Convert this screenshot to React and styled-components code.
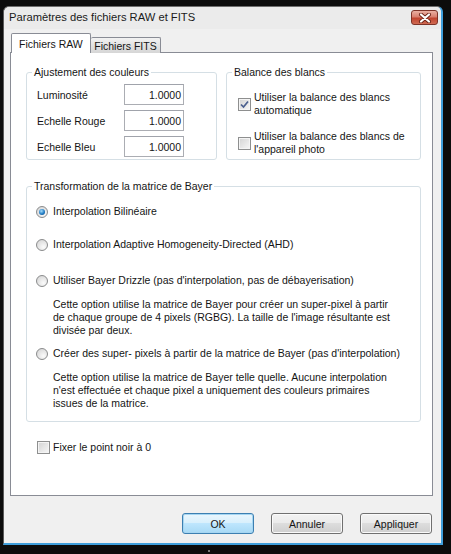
import React from 'react'
import styled, { createGlobalStyle } from 'styled-components'

const GlobalStyle = createGlobalStyle`
  html, body {
    margin: 0;
    padding: 0;
    background: #0c0c0c;
  }
  * {
    box-sizing: border-box;
  }
`;

const Screen = styled.div`
  width: 451px;
  height: 554px;
  padding: 6px 0 0 3px;
  background: #0c0c0c;
  overflow: hidden;
  font-family: "Liberation Sans", Arial, sans-serif;
  font-size: 10.5px;
  color: #151515;
`;

const Window = styled.div`
  width: 440px;
  height: 539px;
  display: flex;
  flex-direction: column;
  background: #f0f0f0;
  border-top: 1px solid #6d6d6d;
  border-left: 1px solid #5a5a5a;
  border-right: 2px solid #3f9fdc;
  border-bottom: 2px solid #3f9fdc;
  border-radius: 6px 6px 0 0;
`;

const TitleBar = styled.div`
  height: 22px;
  display: flex;
  align-items: flex-start;
  justify-content: space-between;
  padding: 3px 3px 0 5px;
  background: #ebebeb;
  border-radius: 6px 6px 0 0;
`;

const Title = styled.div`
  font-size: 11.2px;
  line-height: 14px;
  color: #1a1a1a;
`;

const CloseButton = styled.div`
  width: 27px;
  height: 15px;
  margin-top: 0;
  display: flex;
  align-items: center;
  justify-content: center;
  border: 1px solid #7d3328;
  border-radius: 3px;
  background: linear-gradient(#eab0a2 0%, #d9806f 45%, #c0442f 55%, #d06a52 100%);
`;

const Body = styled.div`
  flex: 1;
  display: flex;
  flex-direction: column;
  padding: 4px 8px 0 6px;
`;

const Tabs = styled.div`
  height: 20px;
  display: flex;
  align-items: flex-end;
  padding-left: 1px;
`;

const Tab = styled.div`
  position: relative;
  width: ${p => (p.$active ? 80 : 70)}px;
  height: ${p => (p.$active ? 20 : 16)}px;
  display: flex;
  align-items: center;
  justify-content: ${p => (p.$active ? 'flex-start' : 'center')};
  padding-left: ${p => (p.$active ? 7 : 0)}px;
  border: 1px solid #898c95;
  border-bottom: none;
  border-left: ${p => (p.$active ? '1px solid #898c95' : 'none')};
  border-radius: 2px 2px 0 0;
  background: ${p =>
    p.$active ? '#ffffff' : 'linear-gradient(#f3f3f3, #e2e2e2 50%, #d6d6d6)'};
  z-index: ${p => (p.$active ? 2 : 0)};
`;

const Panel = styled.div`
  height: 444px;
  margin-top: -1px;
  display: flex;
  flex-direction: column;
  padding: 13px 11px 0 15px;
  background: #ffffff;
  border: 1px solid #898c95;
`;

const TopRow = styled.div`
  display: grid;
  grid-template-columns: 191px 1fr;
  column-gap: 9px;
`;

const Group = styled.fieldset`
  margin: ${p => p.$mt || 0}px 0 0 0;
  padding: 0;
  min-width: 0;
  border: 1px solid #d5dfe5;
  border-radius: 3px;
`;

const Legend = styled.legend`
  margin-left: 5px;
  padding: 0 2px;
  line-height: 13px;
`;

const ValueGrid = styled.div`
  display: grid;
  grid-template-columns: 87px 60px;
  row-gap: 5px;
  align-items: center;
  padding: 5px 0 2px 10px;
`;

const Input = styled.div`
  height: 21px;
  display: flex;
  align-items: center;
  justify-content: flex-end;
  padding-right: 2px;
  border: 1px solid #abadb3;
  border-top-color: #a0a3ab;
  background: #ffffff;
`;

const CheckList = styled.div`
  display: flex;
  flex-direction: column;
  gap: 13px;
  padding: 12px 0 3px 11px;
`;

const CheckRow = styled.div`
  display: flex;
  align-items: center;
  gap: 3px;
  margin: ${p => p.$mt || 0}px 0 0 ${p => p.$ml || 0}px;
  line-height: 13px;
`;

const Box = styled.span`
  flex: none;
  width: 13px;
  height: 13px;
  display: flex;
  align-items: center;
  justify-content: center;
  border: 1px solid #8e8f8f;
  background: linear-gradient(135deg, #d3d3d3, #f7f7f7);
  box-shadow: inset 0 0 0 1px #f4f4f4;
`;

const OptionList = styled.div`
  display: flex;
  flex-direction: column;
  padding: 12px 0 11px 9px;
`;

const RadioRow = styled.div`
  display: flex;
  align-items: center;
  gap: 5px;
  margin-top: ${p => p.$mt || 0}px;
  line-height: 13px;
`;

const Radio = styled.span`
  flex: none;
  width: 12px;
  height: 12px;
  display: flex;
  align-items: center;
  justify-content: center;
  border: 1px solid #8a8b8c;
  border-radius: 50%;
  background: radial-gradient(circle at 65% 70%, #fbfbfb, #d9d9d9 80%);
  &::after {
    content: '';
    display: ${p => (p.$checked ? 'block' : 'none')};
    width: 6px;
    height: 6px;
    border-radius: 50%;
    background: radial-gradient(circle at 40% 35%, #a6dcfb, #1f7cc4 55%, #0b3f7a);
  }
`;

const Description = styled.div`
  margin: ${p => p.$mt || 0}px 0 0 17px;
  line-height: 13px;
`;

const ButtonRow = styled.div`
  display: flex;
  justify-content: flex-end;
  gap: 17px;
  margin-top: 17px;
  padding-right: 1px;
`;

const Button = styled.div`
  width: 72px;
  height: 21px;
  display: flex;
  align-items: center;
  justify-content: center;
  border: 1px solid ${p => (p.$primary ? '#3c7fb1' : '#707070')};
  border-radius: 3px;
  background: ${p =>
    p.$primary
      ? 'linear-gradient(#eaf6fd 0%, #d9f0fc 45%, #bee6fd 50%, #a7d9f5 100%)'
      : 'linear-gradient(#f2f2f2 0%, #ebebeb 45%, #dddddd 50%, #cfcfcf 100%)'};
  box-shadow: inset 0 0 0 1px ${p => (p.$primary ? '#a6d6f2' : '#fafafa')};
`;

const Dot = styled.div`
  width: 2px;
  height: 2px;
  margin: 5px 0 0 205px;
  background: #777;
`;

const CloseIcon = () => (
  <svg width="14" height="10" viewBox="0 0 14 10">
    <path d="M3 1.5 L11 8.5 M11 1.5 L3 8.5" stroke="#6b2418" strokeWidth="4" strokeLinecap="round" />
    <path d="M3 1.5 L11 8.5 M11 1.5 L3 8.5" stroke="#ffffff" strokeWidth="2.2" strokeLinecap="round" />
  </svg>
);

const Check = ({ checked }) => (
  <Box>
    {checked && (
      <svg width="9" height="9" viewBox="0 0 9 9">
        <path d="M1 4.5 L3.5 7 L8 1.5" fill="none" stroke="#4a5f8e" strokeWidth="1.7" />
      </svg>
    )}
  </Box>
);

const values = [
  ['Luminosité', '1.0000'],
  ['Echelle Rouge', '1.0000'],
  ['Echelle Bleu', '1.0000'],
];

const options = [
  { label: 'Interpolation Bilinéaire', checked: true, mt: 0 },
  { label: 'Interpolation Adaptive Homogeneity-Directed (AHD)', mt: 20 },
  {
    label: "Utiliser Bayer Drizzle (pas d'interpolation, pas de débayerisation)",
    mt: 23,
    desc: [
      'Cette option utilise la matrice de Bayer pour créer un super-pixel à partir',
      "de chaque groupe de 4 pixels (RGBG). La taille de l'image résultante est",
      'divisée par deux.',
    ],
  },
  {
    label: "Créer des super- pixels à partir de la matrice de Bayer (pas d'interpolation)",
    mt: 10,
    desc: [
      'Cette option utilise la matrice de Bayer telle quelle. Aucune interpolation',
      "n'est effectuée et chaque pixel a uniquement des couleurs primaires",
      'issues de la matrice.',
    ],
  },
];

function App() {
  return (
    <>
      <GlobalStyle />
      <Screen>
        <Window>
          <TitleBar>
            <Title>Paramètres des fichiers RAW et FITS</Title>
            <CloseButton>
              <CloseIcon />
            </CloseButton>
          </TitleBar>
          <Body>
            <Tabs>
              <Tab $active>Fichiers RAW</Tab>
              <Tab>Fichiers FITS</Tab>
            </Tabs>
            <Panel>
              <TopRow>
                <Group>
                  <Legend>Ajustement des couleurs</Legend>
                  <ValueGrid>
                    {values.map(([label, value]) => (
                      <React.Fragment key={label}>
                        <span>{label}</span>
                        <Input>{value}</Input>
                      </React.Fragment>
                    ))}
                  </ValueGrid>
                </Group>
                <Group>
                  <Legend>Balance des blancs</Legend>
                  <CheckList>
                    <CheckRow>
                      <Check checked />
                      <span>Utiliser la balance des blancs<br />automatique</span>
                    </CheckRow>
                    <CheckRow>
                      <Check />
                      <span>Utiliser la balance des blancs de<br />l'appareil photo</span>
                    </CheckRow>
                  </CheckList>
                </Group>
              </TopRow>
              <Group $mt={20}>
                <Legend>Transformation de la matrice de Bayer</Legend>
                <OptionList>
                  {options.map(opt => (
                    <React.Fragment key={opt.label}>
                      <RadioRow $mt={opt.mt}>
                        <Radio $checked={opt.checked} />
                        <span>{opt.label}</span>
                      </RadioRow>
                      {opt.desc && (
                        <Description $mt={11}>
                          {opt.desc.map(line => (
                            <div key={line}>{line}</div>
                          ))}
                        </Description>
                      )}
                    </React.Fragment>
                  ))}
                </OptionList>
              </Group>
              <CheckRow $mt={19} $ml={11}>
                <Check />
                <span>Fixer le point noir à 0</span>
              </CheckRow>
            </Panel>
            <ButtonRow>
              <Button $primary>OK</Button>
              <Button>Annuler</Button>
              <Button>Appliquer</Button>
            </ButtonRow>
          </Body>
        </Window>
        <Dot />
      </Screen>
    </>
  )
}

export default App
